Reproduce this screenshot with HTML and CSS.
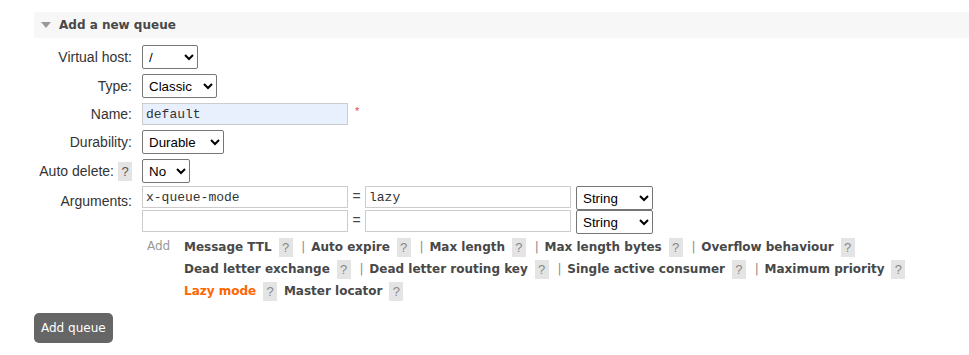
FILE: index.html
```html
<!DOCTYPE html>
<html lang="en">
<head>
    <meta charset="UTF-8">
    <title>Add a new queue</title>
    <link rel="stylesheet" href="styles.css">
</head>
<body>

    <!-- Section header -->
    <div class="section">
        <div class="section-head">
            <span class="arrow"></span>
            <h2>Add a new queue</h2>
        </div>

        <form class="queue-form">
            <div class="row">
                <label class="lbl">Virtual host:</label>
                <select class="sel sel-vhost"><option>/</option></select>
            </div>
            <div class="row">
                <label class="lbl">Type:</label>
                <select class="sel sel-type"><option>Classic</option></select>
            </div>
            <div class="row">
                <label class="lbl">Name:</label>
                <input type="text" class="txt name" value="default">
                <span class="req">*</span>
            </div>
            <div class="row">
                <label class="lbl">Durability:</label>
                <select class="sel sel-dur"><option>Durable</option></select>
            </div>
            <div class="row">
                <label class="lbl">Auto delete: <span class="help">?</span></label>
                <select class="sel sel-auto"><option>No</option></select>
            </div>
            <div class="row args-row">
                <label class="lbl">Arguments:</label>
                <div class="args">
                    <div class="arg">
                        <input type="text" class="txt" value="x-queue-mode">
                        <span class="eq">=</span>
                        <input type="text" class="txt" value="lazy">
                        <select class="sel sel-kind"><option>String</option></select>
                    </div>
                    <div class="arg">
                        <input type="text" class="txt" value="">
                        <span class="eq">=</span>
                        <input type="text" class="txt" value="">
                        <select class="sel sel-kind"><option>String</option></select>
                    </div>
                    <div class="add-list">
                        <span class="add">Add</span>
                        <div class="links">
                            <p>
                                <a>Message TTL</a> <span class="help">?</span> <span class="sep">|</span>
                                <a>Auto expire</a> <span class="help">?</span> <span class="sep">|</span>
                                <a>Max length</a> <span class="help">?</span> <span class="sep">|</span>
                                <a>Max length bytes</a> <span class="help">?</span> <span class="sep">|</span>
                                <a>Overflow behaviour</a> <span class="help">?</span>
                            </p>
                            <p>
                                <a>Dead letter exchange</a> <span class="help">?</span> <span class="sep">|</span>
                                <a>Dead letter routing key</a> <span class="help">?</span> <span class="sep">|</span>
                                <a>Single active consumer</a> <span class="help">?</span> <span class="sep">|</span>
                                <a>Maximum priority</a> <span class="help">?</span>
                            </p>
                            <p>
                                <a class="active">Lazy mode</a> <span class="help">?</span>
                                <a>Master locator</a> <span class="help">?</span>
                            </p>
                        </div>
                    </div>
                </div>
            </div>

            <button type="button" class="btn">Add queue</button>
        </form>
    </div>

</body>
</html>
```

FILE: styles.css
```css
/* page */
body {
    margin: 0;
    font-family: 'Liberation Sans', Arial, sans-serif;
    font-size: 14px;
    color: #333;
    background: #fff;
}

.section {
    padding: 12px 0 0 34px;
}

/* header bar */
.section-head {
    display: flex;
    align-items: center;
    height: 26px;
    background: #f7f7f7;
    padding-left: 7px;
}

.arrow {
    width: 0;
    height: 0;
    border-left: 5px solid transparent;
    border-right: 5px solid transparent;
    border-top: 6px solid #999;
    margin-right: 8px;
}

h2 {
    margin: 0;
    font-family: 'DejaVu Sans', Verdana, sans-serif;
    font-size: 12px;
    font-weight: bold;
    color: #484848;
}

/* form rows */
.queue-form {
    padding-top: 7px;
}

.row {
    display: flex;
    align-items: center;
    margin-bottom: 5px;
}

.lbl {
    width: 98px;
    padding-right: 10px;
    display: flex;
    justify-content: flex-end;
    align-items: center;
    gap: 4px;
    white-space: nowrap;
}

.sel {
    font-family: 'Liberation Sans', Arial, sans-serif;
    font-size: 13.33px;
    height: 24px;
    border: 1px solid #767676;
    border-radius: 2px;
    background: #fff;
    color: #000;
    padding: 0 2px;
}

.sel-vhost { width: 56px; }
.sel-type { width: 75px; }
.sel-dur { width: 82px; }
.sel-auto { width: 48px; }
.sel-kind { width: 77px; margin-left: 5px; }

.txt {
    width: 206px;
    height: 22px;
    box-sizing: border-box;
    border: 1px solid #ccc;
    font-family: 'Liberation Mono', 'Courier New', monospace;
    font-size: 13px;
    padding: 0 3px;
    color: #333;
}

.txt.name {
    background: #e8f0fe;
}

.req {
    color: #e44;
    font-size: 11px;
    margin-left: 7px;
    align-self: flex-start;
    margin-top: 2px;
}

/* arguments */
.args-row {
    align-items: flex-start;
    margin-top: -2px;
}

.args-row .lbl {
    height: 30px;
}

.arg {
    display: flex;
    align-items: flex-start;
    height: 24px;
}

.eq {
    width: 17px;
    text-align: center;
    color: #484848;
    line-height: 20px;
}

.add-list {
    display: flex;
    margin-top: 4px;
}

.add {
    color: #999;
    width: 37px;
    padding-left: 5px;
    font-family: 'DejaVu Sans', Verdana, sans-serif;
    font-size: 12px;
    line-height: 16px;
}

.links p {
    margin: 0 0 4px;
    height: 18px;
    font-family: 'DejaVu Sans', Verdana, sans-serif;
    font-size: 12px;
    line-height: 18px;
}

.links p:last-child {
    margin-bottom: 0;
}

.links a {
    font-weight: bold;
    color: #484848;
}

.links a.active {
    color: #f60;
}

.sep {
    color: #888;
    margin: 0 2px;
}

.help {
    display: inline-block;
    background: #e4e4e4;
    color: #888;
    width: 14px;
    height: 19px;
    line-height: 19px;
    text-align: center;
    font-family: 'Liberation Sans', Arial, sans-serif;
    font-size: 13px;
    margin: 0 3px;
    vertical-align: middle;
}

.lbl .help {
    margin: 0;
    color: #555;
}

/* submit */
.btn {
    margin-top: 8px;
    background: #666;
    color: #fff;
    border: none;
    border-radius: 5px;
    font-family: 'DejaVu Sans', Verdana, sans-serif;
    font-size: 12px;
    padding: 0 7px;
    height: 30px;
    white-space: nowrap;
}
```
